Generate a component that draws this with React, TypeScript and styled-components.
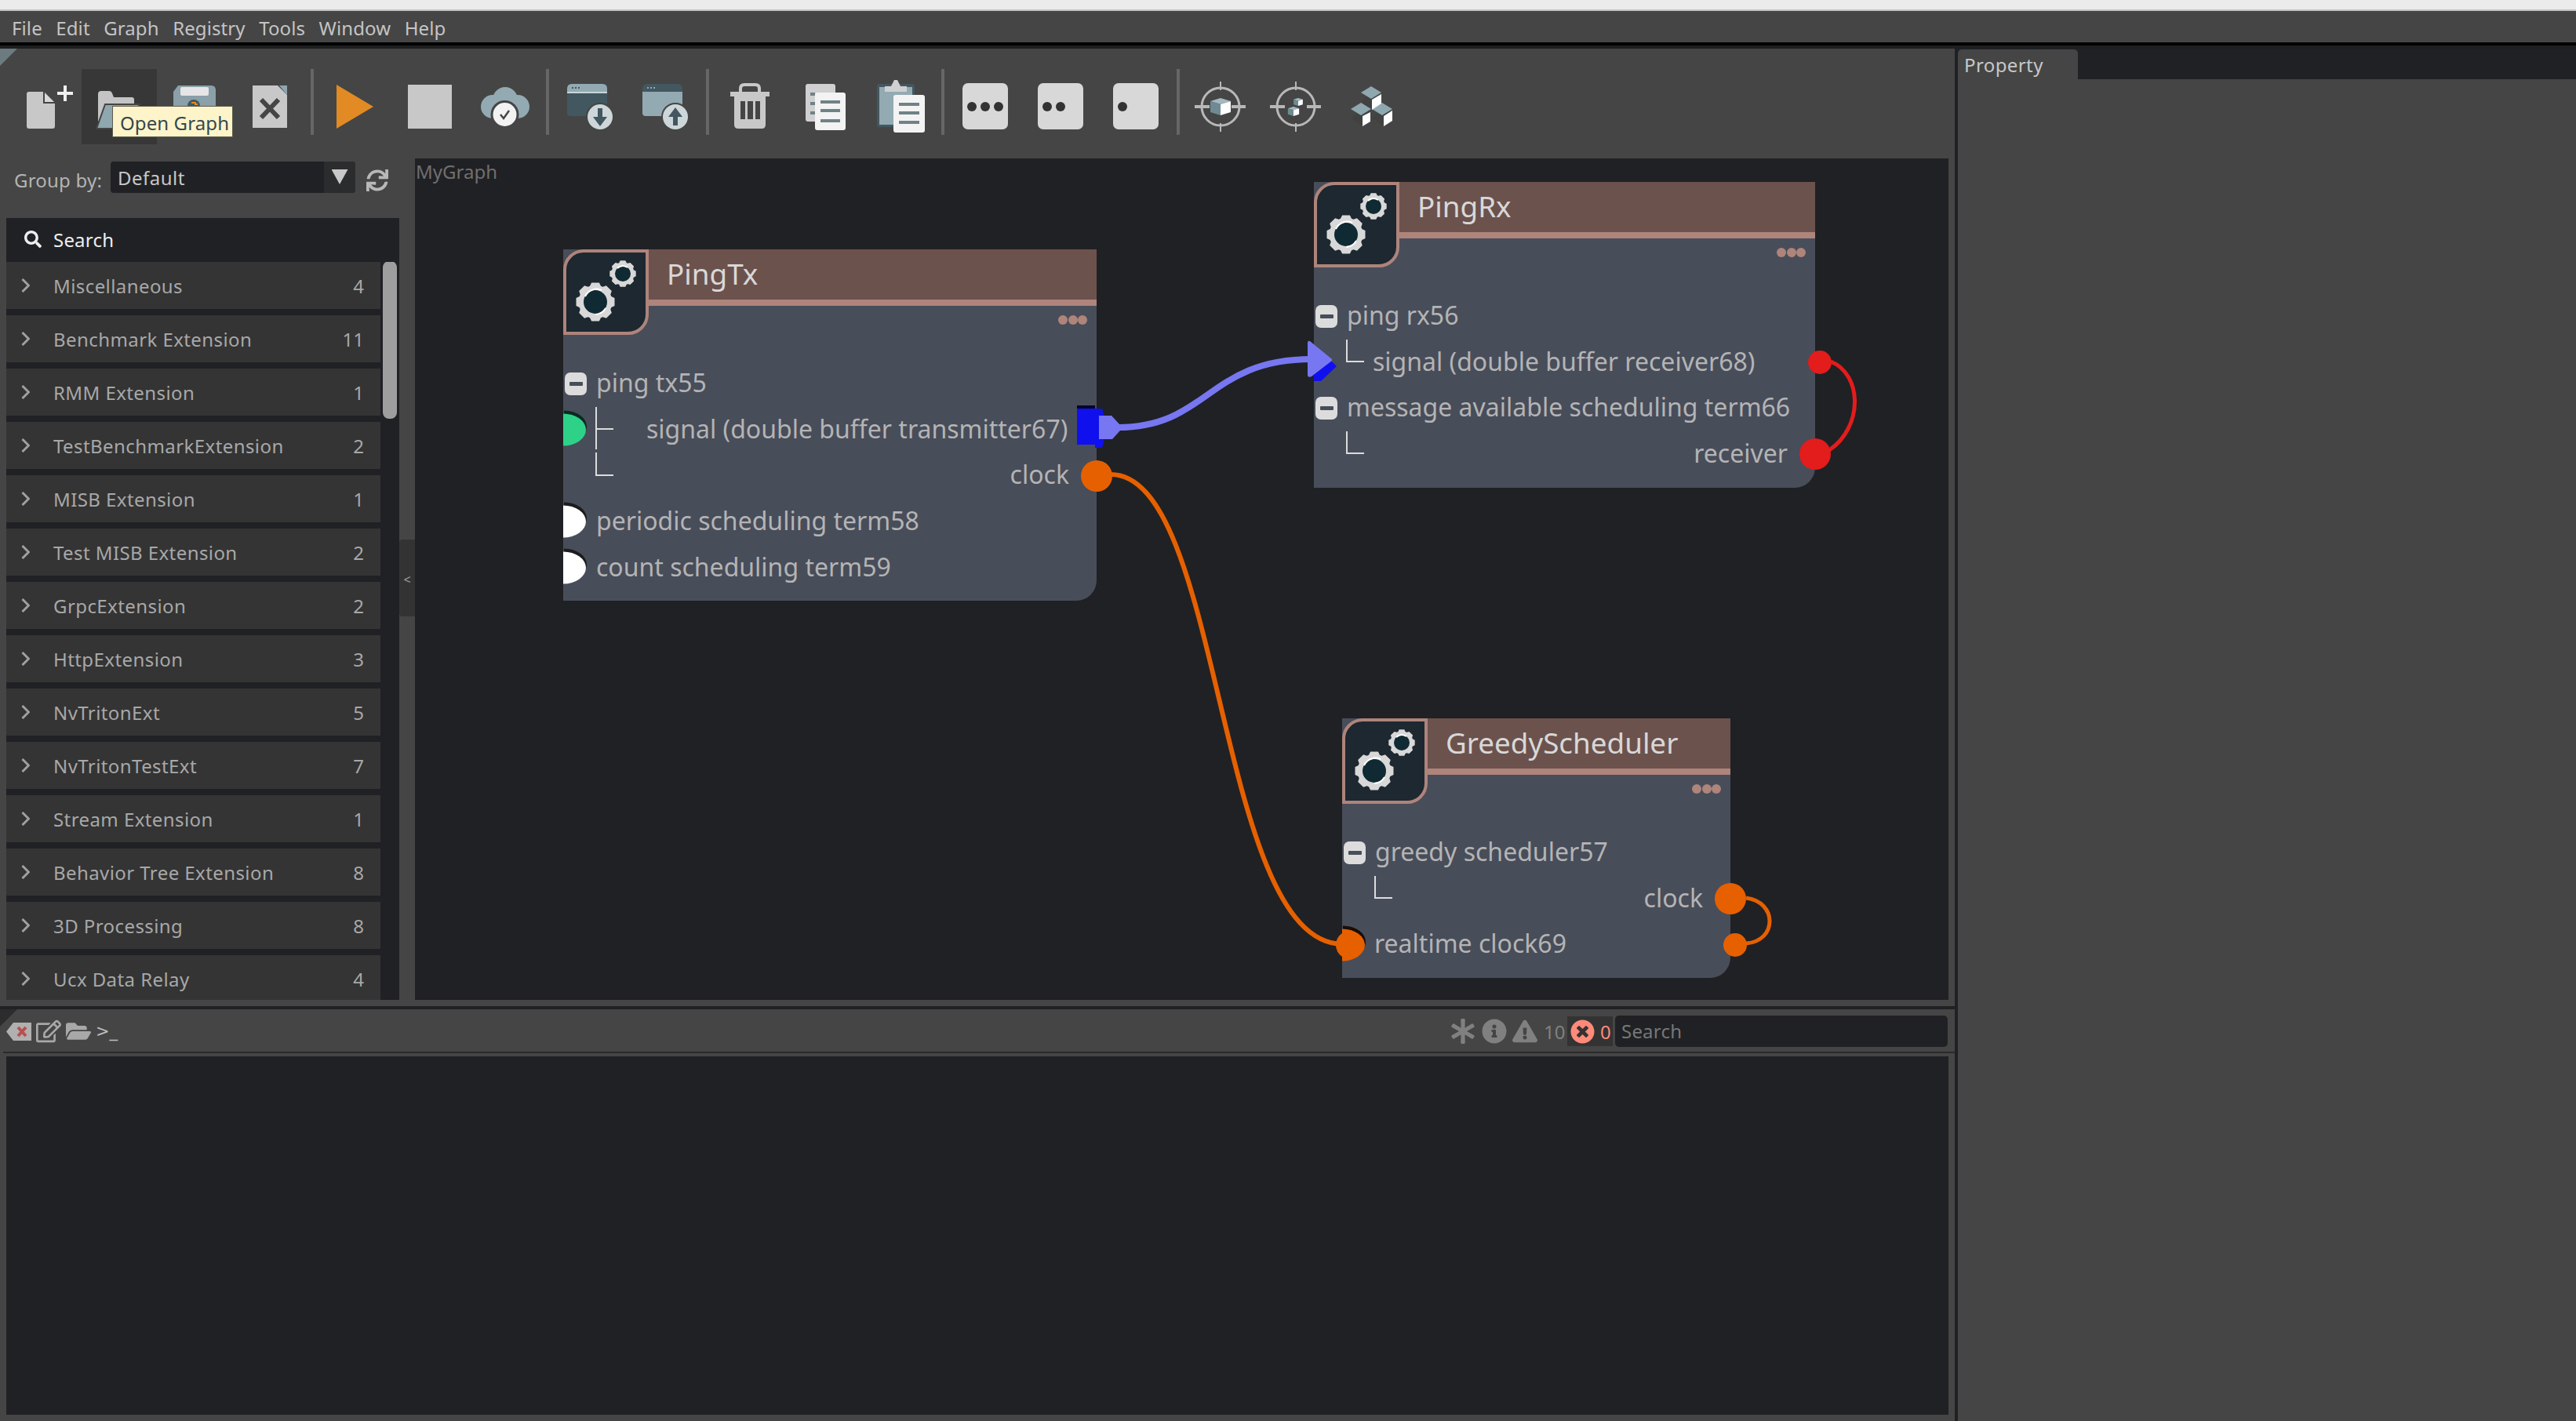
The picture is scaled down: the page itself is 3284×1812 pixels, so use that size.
import React from 'react';
import styled, { createGlobalStyle } from 'styled-components';
import {
  FaAsterisk,
  FaInfoCircle,
  FaExclamationTriangle,
  FaTimesCircle,
  FaFolderOpen,
  FaRegEdit,
  FaSearch,
  FaSync,
} from 'react-icons/fa';

const FONT = '"Noto Sans", "Open Sans", sans-serif';
const PANEL = '#454545';
const DARK = '#202124';
const ROSE = '#ae847b';

const Global = createGlobalStyle`
  html, body { margin: 0; padding: 0; background: ${PANEL}; overflow: hidden; }
  * { box-sizing: border-box; }
  #root { width: 3284px; height: 1812px; }
`;

const Page = styled.div`
  width: 3284px;
  height: 1812px;
  display: flex;
  flex-direction: column;
  font-family: ${FONT};
  font-size: 24px;
  background: ${PANEL};
  color: #c8c8c8;
`;

const WindowEdge = styled.div`
  height: 14px;
  background: #ebebeb;
  border-bottom: 2px solid #c4c4c4;
`;

const MenuBar = styled.div`
  height: 48px;
  display: flex;
  padding: 0 0 0 15px;
  gap: 17.5px;
  background: ${PANEL};
  border-bottom: 4px solid #1d1e20;
  box-shadow: inset 0 -4px 0 #000;
  line-height: 43px;
  color: #c4c4c4;
  letter-spacing: 0.1px;
`;

const MenuItem = styled.span``;

const Workspace = styled.div`
  flex: 1;
  display: flex;
  min-height: 0;
`;

const MainColumn = styled.div`
  width: 2492px;
  display: flex;
  flex-direction: column;
`;

const Corner = styled.div<{ $color: string }>`
  position: absolute;
  left: 0;
  top: 0;
  width: 22px;
  height: 22px;
  background: ${(p) => p.$color};
  clip-path: polygon(0 0, 100% 0, 0 100%);
`;

const Toolbar = styled.div`
  position: relative;
  height: 140px;
  flex: none;
  display: flex;
  align-items: flex-start;
  padding: 26px 0 0 8px;
`;

const ToolButton = styled.div<{ $active?: boolean }>`
  position: relative;
  width: 96px;
  height: 96px;
  flex: none;
  background: ${(p) => (p.$active ? '#373737' : 'transparent')};
  svg { display: block; }
`;

const ToolSep = styled.div`
  width: 12px;
  height: 84px;
  flex: none;
  display: flex;
  justify-content: center;
  &::after {
    content: '';
    width: 4px;
    background: #666;
  }
`;

const Tooltip = styled.div`
  position: absolute;
  left: 39px;
  top: 47px;
  width: 154px;
  height: 40px;
  z-index: 5;
  background: #fdf5c9;
  border: 1px solid #5c5c50;
  color: #37474f;
  line-height: 41px;
  padding-left: 9px;
  white-space: nowrap;
  letter-spacing: 0.1px;
`;

const ContentRow = styled.div`
  height: 1081px;
  flex: none;
  display: flex;
  padding: 0 8px 8px 8px;
`;

const SideColumn = styled.div`
  width: 501px;
  flex: none;
  display: flex;
  flex-direction: column;
`;

const GroupRow = styled.div`
  height: 76px;
  flex: none;
  display: flex;
  align-items: flex-start;
  padding: 4px 0 0 10px;
`;

const GroupLabel = styled.span`
  width: 123px;
  margin-top: 7px;
  color: #b4b4b4;
  white-space: nowrap;
  letter-spacing: 0.2px;
`;

const Combo = styled.div`
  width: 312px;
  height: 40px;
  display: flex;
  background: ${DARK};
  border-radius: 4px;
  overflow: hidden;
  line-height: 41px;
`;

const ComboText = styled.span`
  flex: 1;
  padding-left: 9px;
  color: #c8c8c8;
  letter-spacing: 0.5px;
`;

const ComboArrow = styled.span`
  width: 40px;
  background: #2b2c2e;
  display: flex;
  justify-content: center;
  padding-top: 10px;
  &::after {
    content: '';
    width: 21px;
    height: 19px;
    background: #c8c8c8;
    clip-path: polygon(0 0, 100% 0, 50% 100%);
  }
`;

const RefreshSlot = styled.span`
  margin: 10px 0 0 14px;
  color: #b8b8b8;
  font-size: 28px;
  line-height: 0;
`;

const Tree = styled.div`
  flex: 1;
  min-height: 0;
  display: flex;
  flex-direction: column;
  background: ${DARK};
`;

const TreeSearch = styled.div`
  height: 54px;
  margin-bottom: 2px;
  flex: none;
  display: flex;
  align-items: center;
  padding-left: 23px;
  gap: 15px;
  color: #eee;
  letter-spacing: 0.2px;
`;

const TreeBody = styled.div`
  flex: 1;
  min-height: 0;
  display: flex;
  overflow: hidden;
`;

const TreeRows = styled.div`
  width: 477px;
  flex: none;
  display: flex;
  flex-direction: column;
  gap: 8px;
`;

const TreeRow = styled.div`
  height: 60px;
  flex: none;
  display: flex;
  align-items: center;
  padding: 0 21px 0 19px;
  background: #343434;
  color: #a8a8a8;
`;

const TreeName = styled.span`
  flex: 1;
  margin-left: 30px;
  white-space: nowrap;
  letter-spacing: 0.42px;
`;

const ScrollTrack = styled.div`
  width: 24px;
  flex: none;
  padding: 0 3px;
`;

const ScrollThumb = styled.div`
  height: 201px;
  margin-top: -1px;
  width: 18px;
  background: #9e9e9e;
  border-radius: 8px;
`;

const Gutter = styled.div`
  width: 20px;
  flex: none;
`;

const CollapseHandle = styled.div`
  margin-top: 486px;
  height: 98px;
  background: #333;
  border-radius: 4px 0 0 4px;
  color: #a0a0a0;
  font-size: 16px;
  line-height: 1;
  display: flex;
  justify-content: center;
  padding-top: 43px;
`;

const Canvas = styled.div`
  position: relative;
  width: 1955px;
  height: 1073px;
  flex: none;
  background: ${DARK};
  overflow: hidden;
`;

const GraphName = styled.div`
  position: absolute;
  left: 1px;
  top: 0;
  color: #6f6f6f;
`;

const Wires = styled.svg`
  position: absolute;
  left: 0;
  top: 0;
  z-index: 3;
  pointer-events: none;
`;

const NodeCard = styled.div<{ $x: number; $y: number; $w: number; $h: number }>`
  position: absolute;
  left: ${(p) => p.$x - 529}px;
  top: ${(p) => p.$y - 202}px;
  width: ${(p) => p.$w}px;
  height: ${(p) => p.$h}px;
  background: #484d5a;
  border-bottom-right-radius: 26px;
`;

const NodeHead = styled.div`
  display: flex;
  height: 109px;
`;

const NodeIcon = styled.div`
  width: 109px;
  height: 109px;
  flex: none;
  background: #1d2831;
  border: 4px solid ${ROSE};
  border-top-left-radius: 26px;
  border-bottom-right-radius: 26px;
  svg { display: block; }
`;

const NodeHeadRight = styled.div`
  flex: 1;
  min-width: 0;
`;

const NodeTitle = styled.div`
  height: 72px;
  background: #6c524d;
  border-bottom: 8px solid ${ROSE};
  padding-left: 23px;
  font-size: 36.8px;
  line-height: 63px;
  color: #d8d8d8;
  white-space: nowrap;
`;

const NodeDots = styled.div`
  display: flex;
  justify-content: flex-end;
  gap: 0.5px;
  padding: 12px 12px 0 0;
`;

const NodeDot = styled.span`
  width: 12px;
  height: 12px;
  border-radius: 50%;
  background: ${ROSE};
`;

const NodeRows = styled.div`
  margin-top: 33px;
`;

const PortRow = styled.div`
  position: relative;
  height: 58.7px;
  display: flex;
  align-items: center;
  padding: 0 35px 0 2px;
  font-size: 32px;
  color: #b4b4b4;
  white-space: nowrap;
`;

const Toggle = styled.span`
  width: 28px;
  height: 29px;
  flex: none;
  background: #dcdcdc;
  border-radius: 7px;
  display: flex;
  align-items: center;
  justify-content: center;
  &::after {
    content: '';
    width: 17px;
    height: 5px;
    border-radius: 1px;
    background: #484d5a;
  }
`;

const Branch = styled.span<{ $tee?: boolean }>`
  position: relative;
  width: 23px;
  height: 50%;
  flex: none;
  align-self: flex-start;
  margin-left: 39px;
  border-left: 2px solid #dcdcdc;
  border-bottom: 2px solid #dcdcdc;
  &::after {
    content: ${(p) => (p.$tee ? "''" : 'none')};
    position: absolute;
    left: -2px;
    top: 100%;
    height: 100%;
    border-left: 2px solid #dcdcdc;
  }
`;

const PortLabel = styled.span<{ $gap?: number; $end?: boolean }>`
  position: relative;
  top: -2px;
  margin-left: ${(p) => (p.$end ? 'auto' : `${p.$gap ?? 12}px`)};
`;

const InPin = styled.span<{ $color: string; $edge: string }>`
  position: absolute;
  left: 0;
  top: 50%;
  width: 29px;
  height: 41px;
  transform: translateY(-50%);
  background: ${(p) => p.$color};
  border-radius: 0 29px 29px 0 / 0 20.5px 20.5px 0;
  box-shadow: 1px -4px 0 ${(p) => p.$edge};
`;

const OutPin = styled.span<{ $color: string; $r: number; $dx?: number }>`
  position: absolute;
  right: ${(p) => -p.$r - (p.$dx ?? 0)}px;
  top: 50%;
  width: ${(p) => p.$r * 2}px;
  height: ${(p) => p.$r * 2}px;
  transform: translateY(-50%);
  background: ${(p) => p.$color};
  border-radius: 50%;
`;

const LogArea = styled.div`
  flex: 1;
  min-height: 0;
  display: flex;
  flex-direction: column;
  border-top: 4px solid ${DARK};
`;

const LogBar = styled.div`
  position: relative;
  height: 54px;
  flex: none;
  display: flex;
  align-items: center;
  justify-content: space-between;
  padding: 2px 9px 0 8px;
`;

const LogRule = styled.div`
  height: 2px;
  margin: 0 0 4px 4px;
  background: #2a2a2a;
  flex: none;
`;

const LogTools = styled.div`
  display: flex;
  align-items: center;
  gap: 6px;
  color: #a8a8a8;
  svg { display: block; }
`;

const Prompt = styled.span`
  color: #bdbdbd;
  line-height: 1;
  font-family: "DejaVu Sans", sans-serif;
  font-size: 21px;
`;

const LogFilters = styled.div`
  display: flex;
  align-items: center;
  color: #808080;
  svg { display: block; }
`;

const FilterIcon = styled.span<{ $gap: number }>`
  margin-right: ${(p) => p.$gap}px;
  font-size: 32px;
  line-height: 0;
`;

const FilterCount = styled.span`
  margin-left: 8px;
  width: 26px;
  color: #808080;
`;

const ErrorFilter = styled.div`
  width: 58px;
  height: 38px;
  margin: 0 3px 0 4px;
  display: flex;
  align-items: center;
  padding-left: 4px;
  gap: 7px;
  background: #333;
  color: #ff8a7a;
  font-size: 31px;
  span { font-size: 24px; }
`;

const LogSearch = styled.div`
  width: 424px;
  height: 40px;
  background: ${DARK};
  border-radius: 5px;
  padding-left: 8px;
  line-height: 40px;
  color: #777;
  letter-spacing: 0.2px;
`;

const LogOutput = styled.div`
  height: 457px;
  margin: 0 8px;
  flex: none;
  background: ${DARK};
`;

const Divider = styled.div`
  width: 4px;
  flex: none;
  background: ${DARK};
`;

const PropertyColumn = styled.div`
  flex: 1;
  display: flex;
  flex-direction: column;
`;

const TabStrip = styled.div`
  height: 39px;
  flex: none;
  background: ${DARK};
  padding-top: 1px;
`;

const Tab = styled.div`
  width: 153px;
  height: 38px;
  background: ${PANEL};
  border-radius: 5px 5px 0 0;
  padding-left: 8px;
  line-height: 40px;
  color: #c8c8c8;
  letter-spacing: 0.4px;
`;

const GREY = '#c8c8c8';
const TEAL = '#93aab2';
const SLATE = '#42575f';

const Glyph = ({ children }: { children: React.ReactNode }) => (
  <svg width="96" height="96" viewBox="0 0 96 96">
    {children}
  </svg>
);

const NewIcon = () => (
  <Glyph>
    <path d="M26 32q0-3 3-3h18v15h15v29q0 3-3 3H29q-3 0-3-3z" fill={GREY} />
    <path d="M49 30l12 12H49z" fill="#d8d8d8" />
    <path d="M65 31h20M75 21v20" stroke="#f0f0f0" strokeWidth="4" />
  </Glyph>
);

const OpenIcon = () => (
  <Glyph>
    <path d="M21 32q0-4 4-4h10q3 0 4 3l2 5h23q3 0 3 3v8H31L21 68z" fill="#c4c4c4" />
    <path d="M30 45h44L58 76H19z" fill="#8fa7af" stroke="#454545" strokeWidth="2" />
  </Glyph>
);

const SaveIcon = () => (
  <Glyph>
    <path d="M27 21h42q6 0 6 6v48H21V29z" fill="#8ba0a8" />
    <rect x="30" y="23" width="36" height="11" rx="2" fill="#e6e6e6" />
    <circle cx="47" cy="47" r="8" fill={SLATE} />
    <path d="M44 43h5v2h3" stroke="#e28a24" strokeWidth="2" fill="none" />
  </Glyph>
);

const CloseIcon = () => (
  <Glyph>
    <path d="M26 21h32l12 12v42H26z" fill={GREY} />
    <path d="M60 21h10v12z" fill="#8fa7af" />
    <path d="M37 39l22 23M59 39L37 62" stroke="#454545" strokeWidth="6" />
  </Glyph>
);

const PlayIcon = () => (
  <Glyph>
    <path d="M25 20l47 28-47 28z" fill="#e28a24" />
  </Glyph>
);

const StopIcon = () => (
  <Glyph>
    <rect x="20" y="20" width="56" height="56" fill={GREY} />
  </Glyph>
);

const CloudIcon = () => (
  <Glyph>
    <circle cx="48" cy="39" r="16" fill={TEAL} />
    <circle cx="32" cy="48" r="15" fill={TEAL} />
    <circle cx="64" cy="48" r="15" fill={TEAL} />
    <circle cx="47.5" cy="58" r="18" fill="#454545" />
    <circle cx="47.5" cy="58" r="15" fill="#f2f2f2" />
    <path d="M42 58l4 5 7-10" stroke="#454545" strokeWidth="2.5" fill="none" />
  </Glyph>
);

const WindowIcon = ({ up }: { up?: boolean }) => (
  <Glyph>
    <path d="M19 25q0-6 6-6h39q6 0 6 6v4H19z" fill={up ? SLATE : TEAL} />
    <rect x="19" y="29" width="51" height="2" fill={up ? TEAL : '#c9d5d9'} />
    <path d="M19 31h51v25q0 4-4 4H23q-4 0-4-4z" fill={up ? TEAL : SLATE} />
    <path d="M25 24h2M29 24h2M33 24h2" stroke={up ? TEAL : SLATE} strokeWidth="2" />
    <circle cx="61" cy="61" r="18" fill="#454545" />
    <circle cx="61" cy="61" r="16" fill="#cdd6d9" />
    {up ? (
      <path d="M61 49l9 12h-6v11h-6V61h-6z" fill={SLATE} />
    ) : (
      <path d="M58 50h6v11h6l-9 12-9-12h6z" fill={SLATE} />
    )}
  </Glyph>
);

const TrashIcon = () => (
  <Glyph>
    <path d="M36 29v-4q0-5 5-5h14q5 0 5 5v4" fill="none" stroke={GREY} strokeWidth="4" />
    <rect x="23" y="29" width="50" height="6" fill={GREY} />
    <path d="M28 35h40v36q0 5-5 5H33q-5 0-5-5z" fill={GREY} />
    <path d="M36 41h6v23h-6zM45 41h7v23h-7zM55 41h6v23h-6z" fill="#454545" />
  </Glyph>
);

const CopyIcon = () => (
  <Glyph>
    <rect x="23" y="19" width="38" height="48" rx="3" fill="#d0d0d0" />
    <path d="M29 32h6M29 44h6M29 56h6" stroke="#6f8286" strokeWidth="4" />
    <rect x="35" y="30" width="39" height="48" rx="3" fill="#f3f3f3" />
    <path d="M42 42h25M42 53h25M42 66h25" stroke="#6f8286" strokeWidth="4" />
  </Glyph>
);

const PasteIcon = () => (
  <Glyph>
    <rect x="18" y="19" width="48" height="55" rx="2" fill={SLATE} />
    <rect x="21" y="23" width="42" height="48" fill={TEAL} />
    <path d="M28 22h8l4-8h4l4 8h8v7H28z" fill="#d0d0d0" />
    <rect x="39" y="33" width="40" height="48" rx="3" fill="#f3f3f3" />
    <path d="M46 45h26M46 56h26M46 68h26" stroke="#6f8286" strokeWidth="4" />
  </Glyph>
);

const DotsIcon = ({ n }: { n: number }) => (
  <Glyph>
    <rect x="19" y="18" width="58" height="59" rx="7" fill="#d8d8d8" />
    {[31, 48, 65].slice(0, n).map((cx) => (
      <ellipse key={cx} cx={cx} cy="48" rx="6" ry="6" fill="#333" />
    ))}
  </Glyph>
);

const Cube = ({ x, y, s }: { x: number; y: number; s: number }) => (
  <g transform={`translate(${x} ${y}) scale(${s})`}>
    <path d="M0 -11L13 -7 0 -3-13 -7z" fill="#a3b8bf" />
    <path d="M-13 -7L0 -3V11L-13 7z" fill="#6f8a92" />
    <path d="M0 -3L13 -7V7L0 11z" fill="#fff" />
  </g>
);

const TargetIcon = ({ children }: { children: React.ReactNode }) => (
  <Glyph>
    <circle cx="48" cy="48" r="24" fill="none" stroke="#b8b8b8" strokeWidth="3" />
    <path d="M48 16v11M48 69v11" stroke="#b8b8b8" strokeWidth="2" />
    <path d="M15 48h19M62 48h18" stroke="#b8b8b8" strokeWidth="4" />
    {children}
  </Glyph>
);

const CubesIcon = () => (
  <Glyph>
    <path d="M35 41l13-10 13 10-13 10zM22 62l13-10 13 10-13 10zM49 62l13-10 13 10-13 10z" fill="#3f3f3f" opacity=".6" />
    <path d="M48 22l13 8-13 8-13-8zM35 43l13 8-13 8-13-8zM62 43l13 8-13 8-13-8z" fill="#8fa7af" />
    <path d="M49 39l12-7v12l-12 8zM37 60l10-5v12l-10 6zM64 60l11-7v13l-11 7z" fill="#fff" />
  </Glyph>
);

const ClearLogIcon = () => (
  <svg width="32" height="23" viewBox="0 0 32 23">
    <path d="M9 0h23v23H9L0 11.5z" fill="#b0b0b0" />
    <path d="M15 6l10 11M25 6L15 17" stroke="#b85050" strokeWidth="4" />
  </svg>
);

const ChevronIcon = () => (
  <svg width="11" height="18" viewBox="0 0 11 18">
    <path d="M1.5 1L9.5 9l-8 8" fill="none" stroke="#a0a0a0" strokeWidth="3" />
  </svg>
);

const gearPath = (cx: number, cy: number, r: number, teeth = 8) => {
  const pts: string[] = [];
  const inner = r * 0.86;
  for (let i = 0; i < teeth; i++) {
    const a = (i / teeth) * Math.PI * 2 - Math.PI / 2;
    const w = (Math.PI / teeth) * 0.5;
    const q = (Math.PI / teeth) * 0.85;
    const p = (rad: number, ang: number) => `${(cx + rad * Math.cos(ang)).toFixed(1)} ${(cy + rad * Math.sin(ang)).toFixed(1)}`;
    pts.push(p(inner, a - q), p(r, a - w), p(r, a + w), p(inner, a + q));
  }
  return `M${pts.join('L')}Z`;
};

const GearsIcon = () => (
  <svg width="101" height="101" viewBox="4 4 101 101">
    <path d={gearPath(41, 67, 25)} fill="#d8d8d8" />
    <circle cx="41" cy="67" r="15" fill="#0f2a33" />
    <path d="M28 60a16 16 0 0 1 21-8M54 75a16 16 0 0 1-13 8" fill="none" stroke="#fff" strokeWidth="2" />
    <path d={gearPath(76, 31, 17)} fill="#d8d8d8" />
    <circle cx="76" cy="31" r="10" fill="#0f2a33" />
    <path d="M69 24a11 11 0 0 1 13-1" fill="none" stroke="#fff" strokeWidth="2" />
  </svg>
);

const Node = ({ x, y, w, h, title, children }: { x: number; y: number; w: number; h: number; title: string; children: React.ReactNode }) => (
  <NodeCard $x={x} $y={y} $w={w} $h={h}>
    <NodeHead>
      <NodeIcon>
        <GearsIcon />
      </NodeIcon>
      <NodeHeadRight>
        <NodeTitle>{title}</NodeTitle>
        <NodeDots>
          <NodeDot />
          <NodeDot />
          <NodeDot />
        </NodeDots>
      </NodeHeadRight>
    </NodeHead>
    <NodeRows>{children}</NodeRows>
  </NodeCard>
);

const MENU = ['File', 'Edit', 'Graph', 'Registry', 'Tools', 'Window', 'Help'];
const GROUPS: [string, number][] = [
  ['Miscellaneous', 4],
  ['Benchmark Extension', 11],
  ['RMM Extension', 1],
  ['TestBenchmarkExtension', 2],
  ['MISB Extension', 1],
  ['Test MISB Extension', 2],
  ['GrpcExtension', 2],
  ['HttpExtension', 3],
  ['NvTritonExt', 5],
  ['NvTritonTestExt', 7],
  ['Stream Extension', 1],
  ['Behavior Tree Extension', 8],
  ['3D Processing', 8],
  ['Ucx Data Relay', 4],
];

export default function App() {
  return (
    <Page>
      <Global />
      <WindowEdge />
      <MenuBar>
        {MENU.map((m) => (
          <MenuItem key={m}>{m}</MenuItem>
        ))}
      </MenuBar>
      <Workspace>
        <MainColumn>
          <Toolbar>
            <Corner $color="#6b7b7f" />
            <ToolButton><NewIcon /></ToolButton>
            <ToolButton $active>
              <OpenIcon />
              <Tooltip>Open Graph</Tooltip>
            </ToolButton>
            <ToolButton><SaveIcon /></ToolButton>
            <ToolButton><CloseIcon /></ToolButton>
            <ToolSep />
            <ToolButton><PlayIcon /></ToolButton>
            <ToolButton><StopIcon /></ToolButton>
            <ToolButton><CloudIcon /></ToolButton>
            <ToolSep />
            <ToolButton><WindowIcon /></ToolButton>
            <ToolButton><WindowIcon up /></ToolButton>
            <ToolSep />
            <ToolButton><TrashIcon /></ToolButton>
            <ToolButton><CopyIcon /></ToolButton>
            <ToolButton><PasteIcon /></ToolButton>
            <ToolSep />
            <ToolButton><DotsIcon n={3} /></ToolButton>
            <ToolButton><DotsIcon n={2} /></ToolButton>
            <ToolButton><DotsIcon n={1} /></ToolButton>
            <ToolSep />
            <ToolButton>
              <TargetIcon><Cube x={48} y={48} s={1} /></TargetIcon>
            </ToolButton>
            <ToolButton>
              <TargetIcon>
                <Cube x={51} y={42} s={0.45} />
                <Cube x={45} y={54} s={0.55} />
              </TargetIcon>
            </ToolButton>
            <ToolButton><CubesIcon /></ToolButton>
          </Toolbar>
          <ContentRow>
            <SideColumn>
              <GroupRow>
                <GroupLabel>Group by:</GroupLabel>
                <Combo>
                  <ComboText>Default</ComboText>
                  <ComboArrow />
                </Combo>
                <RefreshSlot><FaSync /></RefreshSlot>
              </GroupRow>
              <Tree>
                <TreeSearch>
                  <FaSearch size={22} />
                  <span>Search</span>
                </TreeSearch>
                <TreeBody>
                  <TreeRows>
                    {GROUPS.map(([name, count]) => (
                      <TreeRow key={name}>
                        <ChevronIcon />
                        <TreeName>{name}</TreeName>
                        <span>{count}</span>
                      </TreeRow>
                    ))}
                  </TreeRows>
                  <ScrollTrack>
                    <ScrollThumb />
                  </ScrollTrack>
                </TreeBody>
              </Tree>
            </SideColumn>
            <Gutter>
              <CollapseHandle>&lt;</CollapseHandle>
            </Gutter>
            <Canvas>
              <GraphName>MyGraph</GraphName>

              <Node x={718} y={318} w={680} h={448} title="PingTx">
                <PortRow>
                  <Toggle />
                  <PortLabel>ping tx55</PortLabel>
                </PortRow>
                <PortRow>
                  <InPin $color="#2dd288" $edge="#0a2a1f" />
                  <Branch $tee />
                  <PortLabel $gap={42}>signal (double buffer transmitter67)</PortLabel>
                </PortRow>
                <PortRow>
                  <Branch />
                  <PortLabel $end>clock</PortLabel>
                  <OutPin $color="#e66000" $r={20} />
                </PortRow>
                <PortRow>
                  <InPin $color="#fff" $edge="#1c1c1c" />
                  <PortLabel $gap={40}>periodic scheduling term58</PortLabel>
                </PortRow>
                <PortRow>
                  <InPin $color="#fff" $edge="#1c1c1c" />
                  <PortLabel $gap={40}>count scheduling term59</PortLabel>
                </PortRow>
              </Node>

              <Node x={1675} y={232} w={639} h={390} title="PingRx">
                <PortRow>
                  <Toggle />
                  <PortLabel>ping rx56</PortLabel>
                </PortRow>
                <PortRow>
                  <Branch />
                  <PortLabel $gap={11}>signal (double buffer receiver68)</PortLabel>
                  <OutPin $color="#e31c1c" $r={15} $dx={6} />
                </PortRow>
                <PortRow>
                  <Toggle />
                  <PortLabel>message available scheduling term66</PortLabel>
                </PortRow>
                <PortRow>
                  <Branch />
                  <PortLabel $end>receiver</PortLabel>
                  <OutPin $color="#e31c1c" $r={20} />
                </PortRow>
              </Node>

              <Node x={1711} y={916} w={495} h={331} title="GreedyScheduler">
                <PortRow>
                  <Toggle />
                  <PortLabel>greedy scheduler57</PortLabel>
                </PortRow>
                <PortRow>
                  <Branch />
                  <PortLabel $end>clock</PortLabel>
                  <OutPin $color="#e66000" $r={20} />
                </PortRow>
                <PortRow>
                  <InPin $color="#e66000" $edge="#1c0c04" />
                  <PortLabel $gap={39}>realtime clock69</PortLabel>
                  <OutPin $color="#e66000" $r={15} $dx={6} />
                </PortRow>
              </Node>

              <Wires width="1955" height="1073" viewBox="529 202 1955 1073">
                <path d="M1416 605C1560 605 1550 1204 1712 1204" fill="none" stroke="#e66000" strokeWidth="6" />
                <path d="M1711 1190A18 18 0 0 0 1711 1220z" fill="#e66000" />
                <path d="M2226 1145C2266 1150 2266 1200 2226 1203" fill="none" stroke="#e66000" strokeWidth="5" />
                <path d="M2334 461C2375 478 2375 545 2332 574" fill="none" stroke="#e31c1c" strokeWidth="5" />
                <path d="M1373 517h23v4h-23z" fill="#05052a" />
                <path d="M1373 521h32l7 24-7 26h-9v-4h-23z" fill="#1010ee" />
                <path d="M1401 530h16l11 12v7l-10 11h-17z" fill="#7777f2" />
                <path d="M1425 545C1540 545 1540 458 1672 458" fill="none" stroke="#7777f2" strokeWidth="8" />
                <path d="M1675 470l22-10 7 7-20 19h-9z" fill="#1010ee" />
                <path d="M1667 437q0-3 3-2l28 23v2l-26 20q-5 2-5-2z" fill="#7777f2" />
              </Wires>
            </Canvas>
          </ContentRow>
          <LogArea>
            <LogBar>
              <Corner $color="#2c2c2c" />
              <LogTools>
                <ClearLogIcon />
                <FaRegEdit size={32} />
                <FaFolderOpen size={32} />
                <Prompt>&gt;_</Prompt>
              </LogTools>
              <LogFilters>
                <FilterIcon $gap={8}><FaAsterisk /></FilterIcon>
                <FilterIcon $gap={7}><FaInfoCircle /></FilterIcon>
                <FilterIcon $gap={0}><FaExclamationTriangle /></FilterIcon>
                <FilterCount>10</FilterCount>
                <ErrorFilter>
                  <FaTimesCircle />
                  <span>0</span>
                </ErrorFilter>
                <LogSearch>Search</LogSearch>
              </LogFilters>
            </LogBar>
            <LogRule />
            <LogOutput />
          </LogArea>
        </MainColumn>
        <Divider />
        <PropertyColumn>
          <TabStrip>
            <Tab>Property</Tab>
          </TabStrip>
        </PropertyColumn>
      </Workspace>
    </Page>
  );
}
